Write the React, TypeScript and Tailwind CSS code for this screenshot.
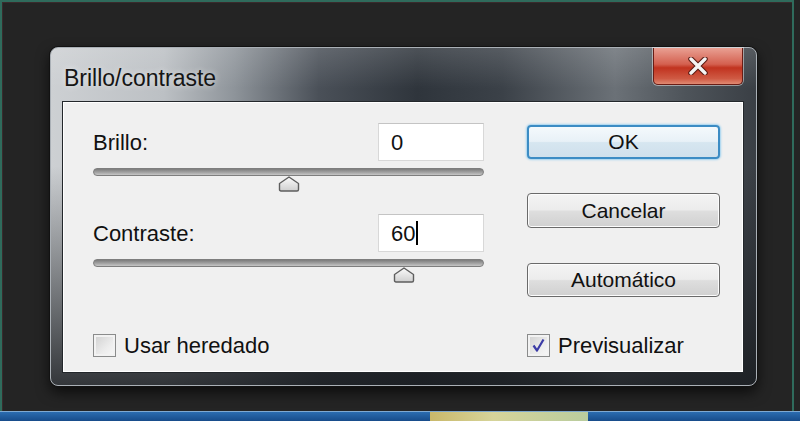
import React from 'react';

const font = "font-['Liberation_Sans',Arial,sans-serif]";

const SliderThumb = () => (
  <svg width="22" height="16" viewBox="0 0 22 16">
    <defs>
      <linearGradient id="thumbFill" x1="0" y1="0" x2="0" y2="1">
        <stop offset="0%" stopColor="#fbfbfb" />
        <stop offset="100%" stopColor="#cfcfcf" />
      </linearGradient>
    </defs>
    <path
      d="M11 1 L20.5 7.5 L20.5 13.5 Q20.5 15 19 15 L3 15 Q1.5 15 1.5 13.5 L1.5 7.5 Z"
      fill="url(#thumbFill)"
      stroke="#5e5e5e"
      strokeWidth="1.4"
      strokeLinejoin="round"
    />
  </svg>
);

const Slider = ({ value }: { value: number }) => (
  <div className="relative h-[25px] w-full">
    <div className="h-[8px] w-full rounded-full border border-[#7e7e7e] bg-[linear-gradient(to_bottom,#7c7c7c,#a2a2a2_55%,#c6c6c6)]" />
    <div className="absolute top-[8px] -translate-x-1/2" style={{ left: `${value}%` }}>
      <SliderThumb />
    </div>
  </div>
);

const NumberField = ({ value, caret }: { value: string; caret?: boolean }) => (
  <div className="flex h-[38px] w-[106px] items-center border border-[#d8d8d8] border-t-[#c4c4c4] bg-white pl-[12px] text-[22px] text-[#111]">
    <span>{value}</span>
    {caret && <span className="ml-[1px] h-[24px] w-[2px] bg-black" />}
  </div>
);

const DialogButton = ({ label, primary, className }: { label: string; primary?: boolean; className?: string }) => (
  <button
    className={`flex h-[34px] w-full items-center justify-center rounded-[4px] text-[21px] text-[#111] ${
      primary
        ? 'border-2 border-[#3c8cc4] bg-[linear-gradient(to_bottom,#f4f9fc,#e8f1f7_48%,#d6e6f0_52%,#cfe0ec)] shadow-[0_0_2px_1px_#9fd2f0]'
        : 'border border-[#6a6a6a] bg-[linear-gradient(to_bottom,#f4f4f4,#ececec_48%,#dedede_52%,#d0d0d0)] shadow-[inset_0_0_0_1px_#fcfcfc]'
    } ${className ?? ''}`}
  >
    {label}
  </button>
);

const CheckBox = ({ checked }: { checked?: boolean }) => (
  <div className="flex h-[23px] w-[23px] items-center justify-center border border-[#8a8b8b] bg-[linear-gradient(135deg,#cfcfcf,#ececec_60%,#f8f8f8)] shadow-[inset_0_0_0_2px_#f2f2f2]">
    {checked && (
      <svg width="15" height="15" viewBox="0 0 15 15">
        <path d="M2.5 7.5 L6 12.5 L12.5 1.5" fill="none" stroke="#3b3ba6" strokeWidth="2.2" strokeLinejoin="round" />
      </svg>
    )}
  </div>
);

export default function App() {
  return (
    <div className={`flex h-[421px] w-[800px] flex-col overflow-hidden bg-[#242424] ${font}`}>
      {/* desktop area */}
      <div className="h-[411px] border-l-2 border-r-2 border-t-2 border-[#2f6b5c] mr-[6px]">
        <div className="h-full border-l border-t border-[#3a2a2c] pl-[47px] pt-[44px]">
          {/* window frame */}
          <div className="flex h-[339px] w-[707px] flex-col rounded-[8px] border border-[#aab0b6] bg-[linear-gradient(to_bottom,rgba(255,255,255,0.14)_0%,rgba(0,0,0,0)_12%,rgba(0,0,0,0)_35%,rgba(25,28,32,0.85)_100%),linear-gradient(to_right,#cdd0d3_0%,#bcc0c4_16%,#8e949a_26%,#4a5058_38%,#2f353c_52%,#3b4148_64%,#6b7177_80%,#4e545a_90%,#3a3f45_100%)] shadow-[0_0_0_1px_#121212,0_6px_14px_rgba(0,0,0,0.7)]">
            {/* title bar */}
            <div className="flex h-[53px] items-start justify-between">
              <span className="pl-[13px] pt-[13px] text-[23px] text-[#151515] [text-shadow:0_0_6px_rgba(255,255,255,0.7)]">
                Brillo/contraste
              </span>
              <div className="mr-[13px] flex h-[37px] w-[90px] items-center justify-center rounded-b-[5px] border border-t-0 border-[#6a1d15] bg-[linear-gradient(to_bottom,#e9a093,#d4604f_45%,#c1331f_55%,#cf5a44_85%,#e08a72)] shadow-[0_0_0_1px_rgba(255,255,255,0.45)]">
                <svg width="20" height="18" viewBox="0 0 20 18">
                  <path d="M3 2 L17 16 M17 2 L3 16" stroke="#5a1a12" strokeWidth="5.5" strokeLinecap="round" />
                  <path d="M3 2 L17 16 M17 2 L3 16" stroke="#f4f4f4" strokeWidth="3.4" strokeLinecap="round" />
                </svg>
              </div>
            </div>

            {/* client area */}
            <div className="ml-[11px] mr-[12px] h-[272px] border border-[#23272b] bg-[#f0f0f0] shadow-[inset_0_0_0_1px_#ffffff]">
              <div className="grid grid-cols-[391px_193px] gap-x-[43px] pl-[30px] pt-[21px]">
                <div className="flex flex-col">
                  <div className="flex items-center justify-between">
                    <span className="text-[22px] text-[#111]">Brillo:</span>
                    <NumberField value="0" />
                  </div>
                  <div className="mt-[7px]">
                    <Slider value={50} />
                  </div>
                  <div className="mt-[21px] flex items-center justify-between">
                    <span className="text-[22px] text-[#111]">Contraste:</span>
                    <NumberField value="60" caret />
                  </div>
                  <div className="mt-[7px]">
                    <Slider value={79.5} />
                  </div>
                </div>

                <div className="mt-[2px] flex flex-col">
                  <DialogButton label="OK" primary />
                  <DialogButton label="Cancelar" className="mt-[34px] h-[35px]" />
                  <DialogButton label="Automático" className="mt-[35px]" />
                </div>
              </div>

              <div className="mt-[32px] grid grid-cols-[391px_193px] gap-x-[43px] pl-[30px]">
                <div className="flex items-center">
                  <CheckBox />
                  <span className="ml-[8px] text-[22px] text-[#111]">Usar heredado</span>
                </div>
                <div className="flex items-center">
                  <CheckBox checked />
                  <span className="ml-[8px] text-[22px] text-[#111]">Previsualizar</span>
                </div>
              </div>
            </div>
          </div>
        </div>
      </div>

      {/* taskbar strip */}
      <div className="flex h-[10px] border-t border-[#7fa9d1]">
        <div className="w-[430px] bg-[linear-gradient(to_bottom,#2b6cb0,#174c8a)]" />
        <div className="w-[158px] bg-[linear-gradient(to_right,#c9b86a,#d6d49a_40%,#b9cc9e)]" />
        <div className="flex-1 bg-[linear-gradient(to_bottom,#2b6cb0,#174c8a)]" />
      </div>
    </div>
  );
}
